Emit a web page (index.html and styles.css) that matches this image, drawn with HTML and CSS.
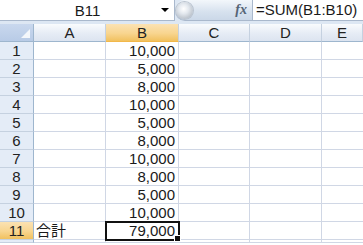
FILE: index.html
```html
<!DOCTYPE html>
<html>
<head>
<meta charset="utf-8">
<link rel="stylesheet" href="styles.css">
</head>
<body>
<div class="fbar">
  <div class="namebox"><span class="name">B11</span><span class="arrow"></span></div>
  <div class="pill"><span class="knob"></span><span class="fx">fx</span></div>
  <div class="formula">=SUM(B1:B10)</div>
</div>
<div class="sheet">
  <div class="corner"><span class="tri"></span></div>
  <div class="ch">A</div><div class="ch sel">B</div><div class="ch">C</div><div class="ch">D</div><div class="ch last">E</div>

  <div class="rh">1</div><div class="c"></div><div class="c n">10,000</div><div class="c"></div><div class="c"></div><div class="c last"></div>
  <div class="rh">2</div><div class="c"></div><div class="c n">5,000</div><div class="c"></div><div class="c"></div><div class="c last"></div>
  <div class="rh">3</div><div class="c"></div><div class="c n">8,000</div><div class="c"></div><div class="c"></div><div class="c last"></div>
  <div class="rh">4</div><div class="c"></div><div class="c n">10,000</div><div class="c"></div><div class="c"></div><div class="c last"></div>
  <div class="rh">5</div><div class="c"></div><div class="c n">5,000</div><div class="c"></div><div class="c"></div><div class="c last"></div>
  <div class="rh">6</div><div class="c"></div><div class="c n">8,000</div><div class="c"></div><div class="c"></div><div class="c last"></div>
  <div class="rh">7</div><div class="c"></div><div class="c n">10,000</div><div class="c"></div><div class="c"></div><div class="c last"></div>
  <div class="rh">8</div><div class="c"></div><div class="c n">8,000</div><div class="c"></div><div class="c"></div><div class="c last"></div>
  <div class="rh">9</div><div class="c"></div><div class="c n">5,000</div><div class="c"></div><div class="c"></div><div class="c last"></div>
  <div class="rh">10</div><div class="c"></div><div class="c n">10,000</div><div class="c"></div><div class="c"></div><div class="c last"></div>
  <div class="rh sel">11</div><div class="c t">合計</div><div class="c n active">79,000<span class="handle"></span></div><div class="c"></div><div class="c"></div><div class="c last"></div>
  <div class="rh"></div><div class="c"></div><div class="c"></div><div class="c"></div><div class="c"></div><div class="c last"></div>
</div>
</body>
</html>
```
FILE: styles.css
```css
html, body {
  margin: 0;
  padding: 0;
  width: 363px;
  height: 245px;
  overflow: hidden;
  background: #ffffff;
  font-family: "Liberation Sans", "Noto Sans CJK JP", sans-serif;
  font-size: 15px;
  color: #1a1a1a;
}

.fbar {
  display: flex;
  height: 24px;
  background: #dde7f3;
  box-sizing: border-box;
  padding-bottom: 3px;
}

.namebox {
  width: 175px;
  height: 21px;
  box-sizing: border-box;
  background: #fff;
  border: 1px solid #a9b8cc;
  border-left: none;
  border-top: none;
  display: flex;
  align-items: center;
}
.name {
  flex: 1;
  text-align: center;
  padding-left: 14px;
}
.arrow {
  width: 0;
  height: 0;
  border-left: 4px solid transparent;
  border-right: 4px solid transparent;
  border-top: 4px solid #000;
  margin-right: 5px;
}

.pill {
  width: 78px;
  height: 21px;
  box-sizing: border-box;
  background: linear-gradient(#f3f7fb, #d6e1ee 60%, #cbd8e8);
  border: 1px solid #a9b8cc;
  border-top: none;
  border-left: none;
  border-radius: 10px 0 0 10px;
  display: flex;
  align-items: center;
  justify-content: space-between;
}
.knob {
  width: 17px;
  height: 17px;
  margin-left: 1px;
  border-radius: 50%;
  background: radial-gradient(circle at 45% 40%, #ffffff 0, #e4e9ef 35%, #9fa8b3 100%);
  box-shadow: 0 0 0 1px #b9c3cf;
}
.fx {
  font-family: "Liberation Serif", serif;
  font-style: italic;
  font-weight: bold;
  font-size: 14px;
  color: #556476;
  margin-right: 5px;
}

.formula {
  flex: 1;
  height: 21px;
  box-sizing: border-box;
  background: #fff;
  border-bottom: 1px solid #a9b8cc;
  padding-left: 3px;
  line-height: 19px;
  white-space: nowrap;
}

.sheet {
  display: grid;
  grid-template-columns: 34px 72px 73px 71px 72px 1fr;
  grid-template-rows: repeat(12, 18px) 3px;
}
.sheet > div {
  box-sizing: border-box;
  border-right: 1px solid #d0d7e5;
  border-bottom: 1px solid #d0d7e5;
}
.sheet > .last { border-right: none; }

.corner {
  background: linear-gradient(#c9d8ee, #b8cbe6);
  border-right: 1px solid #9eb6ce !important;
  border-bottom: 1px solid #9eb6ce !important;
  position: relative;
}
.tri {
  position: absolute;
  right: 3px;
  bottom: 3px;
  width: 0;
  height: 0;
  border-left: 9px solid transparent;
  border-bottom: 9px solid #f4f7fb;
}

.ch {
  background: linear-gradient(#f9fbfd, #e6ecf5 55%, #dce4f0);
  border-right: 1px solid #c5d1e0 !important;
  border-bottom: 1px solid #9eb6ce !important;
  text-align: center;
  line-height: 17px;
  color: #222;
}
.ch.sel {
  background: linear-gradient(#fbe2b3, #f8d58f 55%, #f1c15f);
  border-bottom-color: #f2b84a !important;
}

.rh {
  background: #e4ecf7;
  border-right: 1px solid #9eb6ce !important;
  border-bottom: 1px solid #c5d1e0 !important;
  text-align: center;
  line-height: 17px;
  color: #222;
}
.rh.sel {
  background: linear-gradient(#fbe2b3, #f8d58f 55%, #f1c15f);
}

.c {
  line-height: 17px;
  white-space: nowrap;
}
.n {
  text-align: right;
  padding-right: 3px;
}
.t {
  padding-left: 2px;
}
.active {
  position: relative;
  outline: 2px solid #111;
  outline-offset: -1px;
  z-index: 1;
}
.handle {
  position: absolute;
  right: -3px;
  bottom: -3px;
  width: 5px;
  height: 5px;
  background: #111;
  border: 1px solid #fff;
  box-sizing: content-box;
}
```
